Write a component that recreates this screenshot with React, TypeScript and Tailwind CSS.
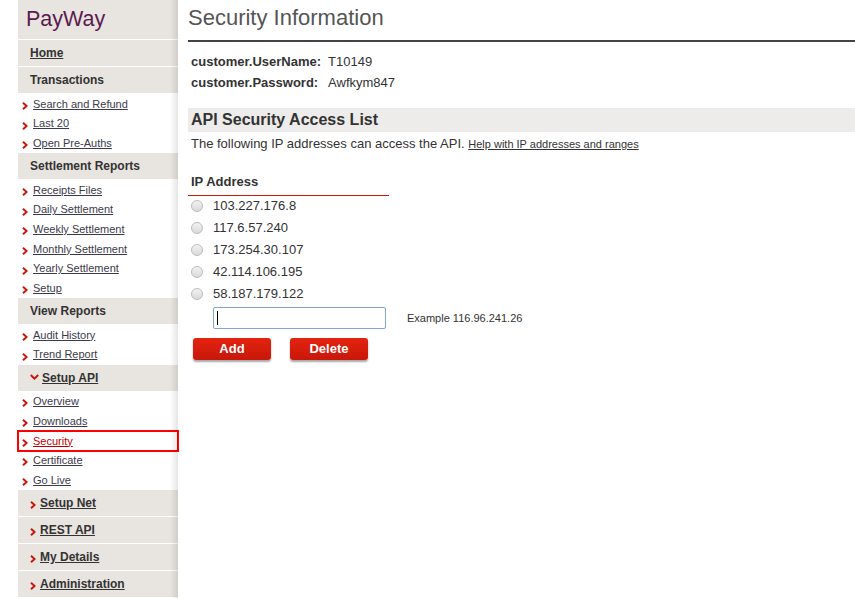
import React from "react";

const Chev = ({ className = "" }: { className?: string }) => (
  <svg width="6" height="8" viewBox="0 0 6 8" className={className}>
    <path d="M1 0.8 L4.6 4 L1 7.2" fill="none" stroke="#c8160c" strokeWidth="2" />
  </svg>
);

const ChevDown = () => (
  <svg width="9" height="6" viewBox="0 0 9 6" className="mr-[3px] mt-[-2px]">
    <path d="M0.8 1 L4.5 4.6 L8.2 1" fill="none" stroke="#c8160c" strokeWidth="2" />
  </svg>
);

const Header = ({ children }: { children: React.ReactNode }) => (
  <div className="h-[26px] mb-px bg-[#e8e4df] flex items-center pl-[12px] text-[12px] font-bold text-[#333]">
    {children}
  </div>
);

const Link = ({ label, active }: { label: string; active?: boolean }) => (
  <div
    className={
      "h-[19.7px] flex items-center pl-[4px] text-[11px] " +
      (active ? "outline-2 outline-[#ff0000] outline-offset-[-1px] text-[#c00000]" : "text-[#3b3b4a]")
    }
  >
    <Chev className="mt-[4px] mr-[5px]" />
    <span className="underline">{label}</span>
  </div>
);

const CollapsedHeader = ({ label }: { label: string }) => (
  <div className="h-[26px] mb-px bg-[#e8e4df] flex items-center pl-[12px] text-[12px] font-bold text-[#333]">
    <Chev className="mt-[4px] mr-[4px]" />
    <span className="underline">{label}</span>
  </div>
);

const Radio = () => (
  <span className="inline-block w-[12px] h-[12px] rounded-full border border-[#bdbdbd] bg-gradient-to-b from-[#f2f2f2] to-[#d9d9d9]" />
);

export default function App() {
  const ips = ["103.227.176.8", "117.6.57.240", "173.254.30.107", "42.114.106.195", "58.187.179.122"];
  return (
    <div className="flex min-h-[598px] bg-white" style={{ fontFamily: '"Liberation Sans", Arial, sans-serif' }}>
      <div className="ml-[18px] w-[160px] shrink-0 relative">
        <div className="h-[39px] mb-px bg-[#e8e4df] flex items-center pl-[8px] text-[21.5px] text-[#5b1b50]">
          PayWay
        </div>
        <Header>
          <span className="underline">Home</span>
        </Header>
        <Header>Transactions</Header>
        <Link label="Search and Refund" />
        <Link label="Last 20" />
        <Link label="Open Pre-Auths" />
        <Header>Settlement Reports</Header>
        <Link label="Receipts Files" />
        <Link label="Daily Settlement" />
        <Link label="Weekly Settlement" />
        <Link label="Monthly Settlement" />
        <Link label="Yearly Settlement" />
        <Link label="Setup" />
        <Header>View Reports</Header>
        <Link label="Audit History" />
        <Link label="Trend Report" />
        <Header>
          <ChevDown />
          <span className="underline">Setup API</span>
        </Header>
        <Link label="Overview" />
        <Link label="Downloads" />
        <Link label="Security" active />
        <Link label="Certificate" />
        <Link label="Go Live" />
        <CollapsedHeader label="Setup Net" />
        <CollapsedHeader label="REST API" />
        <CollapsedHeader label="My Details" />
        <CollapsedHeader label="Administration" />
        <div className="pointer-events-none absolute top-0 bottom-0 right-0 w-[8px] bg-gradient-to-r from-transparent to-black/10" />
      </div>

      <div className="flex-1 ml-[10px] text-[#333]">
        <div className="h-[40px] pt-[5px] text-[22px] text-[#555] leading-[26px]">Security Information</div>
        <div className="h-[2px] bg-[#444]" />
        <div className="grid grid-cols-[max-content_auto] gap-x-[7px] gap-y-[4px] pl-[3px] pt-[11px] text-[13px] leading-[17px]">
          <div className="font-bold">customer.UserName:</div>
          <div>T10149</div>
          <div className="font-bold">customer.Password:</div>
          <div>Awfkym847</div>
        </div>
        <div className="mt-[17px] h-[24px] bg-[#edecea] flex items-center pl-[3px] text-[16px] font-bold">
          API Security Access List
        </div>
        <div className="pl-[3px] mt-[3px] text-[13px] leading-[17px]">
          The following IP addresses can access the API.{" "}
          <span className="text-[11px] underline">Help with IP addresses and ranges</span>
        </div>
        <div className="mt-[20px] w-[201px] pl-[3px] pb-[5px] text-[13px] font-bold leading-[17px]">IP Address</div>
        <div className="w-[201px] h-px bg-[#d0140a]" />
        <div className="-mt-[1px]">
          {ips.map((ip) => (
            <div key={ip} className="h-[22px] flex items-center pl-[3px] text-[13px]">
              <Radio />
              <span className="ml-[10px]">{ip}</span>
            </div>
          ))}
        </div>
        <div className="flex items-center mt-[2px] pl-[25px]">
          <div className="w-[173px] h-[22px] border border-[#7fa6d8] rounded-[2px] flex items-center pl-[3px]">
            <span className="w-px h-[14px] bg-black" />
          </div>
          <span className="ml-[21px] text-[11px]">Example 116.96.241.26</span>
        </div>
        <div className="flex mt-[9px] pl-[5px] gap-[19px]">
          <button className="w-[78px] h-[22px] rounded-[3px] bg-gradient-to-b from-[#e4230f] to-[#c7180a] text-white text-[13px] font-bold shadow-[0_2px_2px_rgba(0,0,0,0.35)]">
            Add
          </button>
          <button className="w-[78px] h-[22px] rounded-[3px] bg-gradient-to-b from-[#e4230f] to-[#c7180a] text-white text-[13px] font-bold shadow-[0_2px_2px_rgba(0,0,0,0.35)]">
            Delete
          </button>
        </div>
      </div>
    </div>
  );
}
